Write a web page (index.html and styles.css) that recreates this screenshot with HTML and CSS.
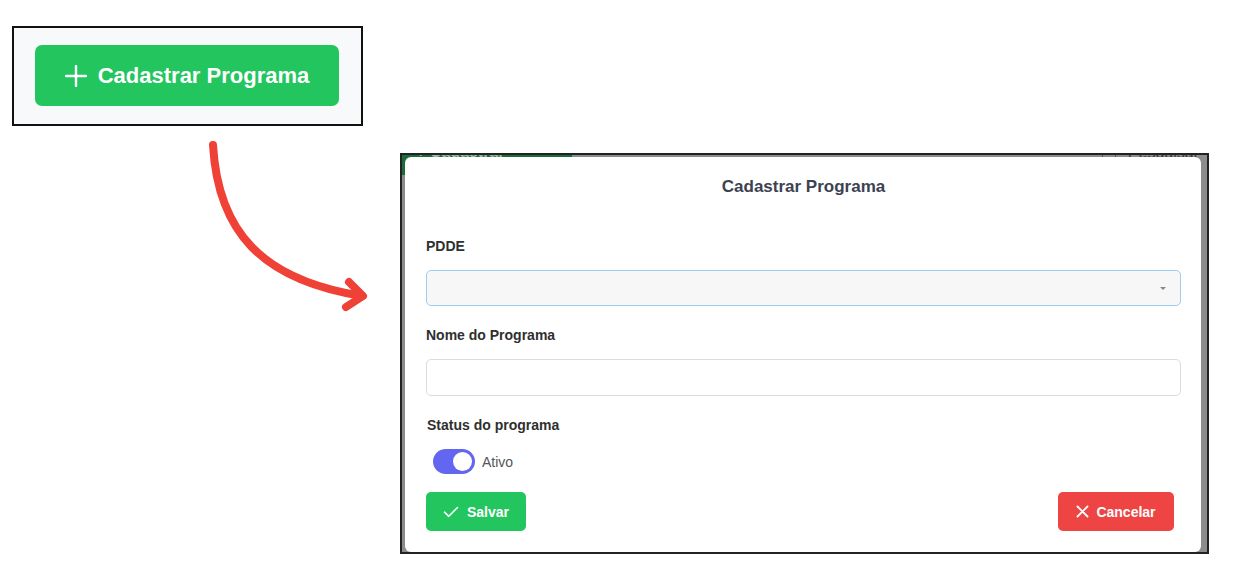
FILE: index.html
```html
<!DOCTYPE html>
<html lang="pt-BR">
<head>
<meta charset="utf-8">
<title>Cadastrar Programa</title>
<link rel="stylesheet" href="styles.css">
</head>
<body>
  <div class="hero">
    <button class="btn-cadastrar">
      <svg class="plus" width="22" height="22" viewBox="0 0 22 22"><path d="M11 1v20M1 11h20" stroke="#fff" stroke-width="2.4" stroke-linecap="round" fill="none"/></svg>
      <span>Cadastrar Programa</span>
    </button>
  </div>

  <div class="row">
    <svg class="arrow" width="200" height="180" viewBox="0 0 200 180">
      <path d="M13 5 C 18 92, 62 140, 162 156" stroke="#ef4136" stroke-width="8" fill="none" stroke-linecap="round"/>
      <path d="M149 142 L163 156 L146 167" stroke="#ef4136" stroke-width="8" fill="none" stroke-linecap="round" stroke-linejoin="round"/>
    </svg>

    <div class="frame">
      <div class="behind">
        <div class="behind-btn">+ Cadastrar Programa</div>
        <div class="behind-search"><span class="behind-icon"></span>Pesquisar</div>
      </div>
      <div class="modal">
        <h2 class="modal-title">Cadastrar Programa</h2>
        <div class="field">
          <label class="label">PDDE</label>
          <div class="select"><span class="caret"></span></div>
        </div>
        <div class="field">
          <label class="label">Nome do Programa</label>
          <div class="input"></div>
        </div>
        <div class="field-status">
          <label class="label">Status do programa</label>
          <div class="toggle-row">
            <span class="toggle"><span class="knob"></span></span>
            <span class="toggle-text">Ativo</span>
          </div>
        </div>
        <div class="footer">
          <button class="btn btn-save">
            <svg width="16" height="12" viewBox="0 0 16 12"><path d="M1.5 6.2 L5.8 10.3 L14.5 1.5" stroke="#fff" stroke-width="1.6" fill="none" stroke-linecap="round" stroke-linejoin="round"/></svg>
            <span>Salvar</span>
          </button>
          <button class="btn btn-cancel">
            <svg width="13" height="13" viewBox="0 0 13 13"><path d="M1.5 1.5 L11.5 11.5 M11.5 1.5 L1.5 11.5" stroke="#fff" stroke-width="1.8" fill="none" stroke-linecap="round"/></svg>
            <span>Cancelar</span>
          </button>
        </div>
      </div>
    </div>
  </div>
</body>
</html>
```

FILE: styles.css
```css
* { box-sizing: border-box; }

body {
  margin: 0;
  padding: 26px 0 0 12px;
  background: #ffffff;
  font-family: "Liberation Sans", Arial, sans-serif;
}

.hero {
  width: 351px;
  height: 100px;
  border: 2px solid #111;
  background: #f8f9fb;
  padding: 17px 0 0 21px;
}

.btn-cadastrar {
  width: 304px;
  height: 61px;
  border: none;
  border-radius: 7px;
  background: #22c55e;
  color: #fff;
  font-family: "Liberation Sans", Arial, sans-serif;
  font-weight: bold;
  font-size: 22px;
  display: flex;
  align-items: center;
  justify-content: center;
  gap: 11px;
  padding: 0;
}

.row {
  display: flex;
  align-items: flex-start;
  margin-top: 14px;
  margin-left: 188px;
}

.arrow { flex: none; display: block; }

.frame {
  position: relative;
  flex: none;
  width: 809px;
  height: 401px;
  margin-top: 13px;
  border: 2px solid #222;
  background: #8c8c8c;
  overflow: hidden;
}

.behind {
  display: flex;
  justify-content: space-between;
  margin-top: -15px;
}

.behind-btn {
  width: 170px;
  height: 35px;
  background: #1d6b38;
  color: #9fb8a6;
  font-size: 16px;
  font-weight: bold;
  padding: 3px 0 0 14px;
  border-radius: 0 0 2px 0;
}

.behind-search {
  display: flex;
  align-items: flex-start;
  gap: 12px;
  color: #3a3a3a;
  font-size: 16px;
  padding: 4px 8px 0 0;
}

.behind-icon {
  width: 14px;
  height: 16px;
  border: 1.5px solid #555;
  margin-top: 2px;
}

.modal {
  position: absolute;
  top: 2px;
  left: 3px;
  right: 6px;
  bottom: 0;
  background: #fff;
  border-radius: 6px;
  padding: 18px 20px 20px 21px;
}

.modal-title {
  margin: 0 0 37px;
  text-align: center;
  font-size: 17px;
  line-height: 24px;
  font-weight: bold;
  color: #3d4251;
}

.label {
  display: block;
  font-size: 14px;
  line-height: 20px;
  font-weight: bold;
  color: #2f2f2f;
  margin-bottom: 14px;
}

.field { margin-bottom: 19px; }

.select {
  position: relative;
  height: 36px;
  border: 1px solid #9fcdee;
  border-radius: 5px;
  background: #f7f7f7;
  display: flex;
  align-items: center;
  justify-content: flex-end;
  padding-right: 14px;
}

.caret {
  width: 0;
  height: 0;
  border-left: 3px solid transparent;
  border-right: 3px solid transparent;
  border-top: 3px solid #888;
}

.input {
  height: 37px;
  border: 1px solid #dcdcdc;
  border-radius: 5px;
  background: #fff;
}

.field-status .label { margin-left: 1px; }

.toggle-row {
  display: flex;
  align-items: center;
  gap: 7px;
  height: 25px;
  padding-left: 7px;
}

.toggle {
  display: flex;
  align-items: center;
  justify-content: flex-end;
  width: 42px;
  height: 25px;
  border-radius: 13px;
  background: #6366f1;
  padding-right: 3px;
}

.knob {
  width: 19px;
  height: 19px;
  border-radius: 50%;
  background: #fff;
}

.toggle-text {
  font-size: 14px;
  color: #555;
}

.footer {
  display: flex;
  justify-content: space-between;
  margin-top: 18px;
  padding-right: 7px;
}

.btn {
  height: 39px;
  border: none;
  border-radius: 5px;
  color: #fff;
  font-family: "Liberation Sans", Arial, sans-serif;
  font-weight: bold;
  font-size: 14px;
  display: flex;
  align-items: center;
  justify-content: center;
  gap: 8px;
  padding: 0;
}

.btn-save { width: 100px; background: #22c55e; }
.btn-cancel { width: 116px; background: #ef4444; gap: 7px; }
```
